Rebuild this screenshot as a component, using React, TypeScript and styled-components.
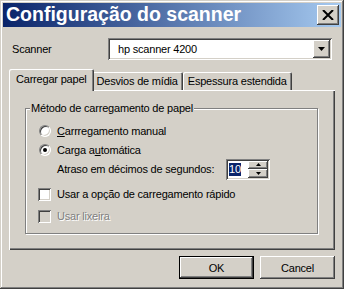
import styled, { createGlobalStyle, css } from "styled-components";

const GlobalStyle = createGlobalStyle`
  html, body {
    margin: 0;
    padding: 0;
    background: #d4d0c8;
  }
  * {
    box-sizing: border-box;
  }
`;

const raised = css`
  box-shadow: inset -1px -1px #404040, inset 1px 1px #ffffff,
    inset -2px -2px #808080, inset 2px 2px #d4d0c8;
`;

const sunken = css`
  box-shadow: inset 1px 1px #808080, inset -1px -1px #ffffff,
    inset 2px 2px #404040, inset -2px -2px #d4d0c8;
`;

function App() {
  return (
    <>
      <GlobalStyle />
      <Window>
        <TitleBar>
          <Title>Configuração do scanner</Title>
          <CloseButton>
            <svg width="12" height="10" viewBox="0 0 12 10">
              <path d="M1 0 L11 10 M11 0 L1 10" stroke="#000" strokeWidth="2" />
            </svg>
          </CloseButton>
        </TitleBar>

        <Body>
          <ScannerRow>
            <ScannerLabel>Scanner</ScannerLabel>
            <Combo>
              <ComboText>hp scanner 4200</ComboText>
              <DropButton>
                <svg width="7" height="4" viewBox="0 0 7 4">
                  <path d="M0 0 H7 L3.5 4 Z" fill="#000" />
                </svg>
              </DropButton>
            </Combo>
          </ScannerRow>

          <TabStrip>
            <Tab $active>Carregar papel</Tab>
            <Tab>Desvios de mídia</Tab>
            <Tab>Espessura estendida</Tab>
          </TabStrip>

          <TabPanel>
            <GroupBox>
              <Legend>Método de carregamento de papel</Legend>

              <OptionRow $h={20}>
                <Indicator>
                  <Radio />
                </Indicator>
                <OptionText>
                  <u>C</u>arrregamento manual
                </OptionText>
              </OptionRow>

              <OptionRow $h={18}>
                <Indicator>
                  <Radio $checked />
                </Indicator>
                <OptionText>
                  Carga a<u>u</u>tomática
                </OptionText>
              </OptionRow>

              <DelayRow>
                <DelayText>Atraso em décimos de segundos:</DelayText>
                <Spinner>
                  <SpinValue>
                    <Selected>10</Selected>
                  </SpinValue>
                  <SpinButtons>
                    <SpinButton>
                      <svg width="5" height="3" viewBox="0 0 5 3">
                        <path d="M2.5 0 L5 3 H0 Z" fill="#000" />
                      </svg>
                    </SpinButton>
                    <SpinButton>
                      <svg width="5" height="3" viewBox="0 0 5 3">
                        <path d="M0 0 H5 L2.5 3 Z" fill="#000" />
                      </svg>
                    </SpinButton>
                  </SpinButtons>
                </Spinner>
              </DelayRow>

              <OptionRow $h={22} $mt={4}>
                <Indicator>
                  <Checkbox />
                </Indicator>
                <OptionText>Usar a opção de carregamento rápido</OptionText>
              </OptionRow>

              <OptionRow $h={22}>
                <Indicator>
                  <Checkbox $disabled />
                </Indicator>
                <OptionText $disabled>Usar lixeira</OptionText>
              </OptionRow>
            </GroupBox>
          </TabPanel>

          <ButtonRow>
            <PushButton $default>OK</PushButton>
            <PushButton>Cancel</PushButton>
          </ButtonRow>
        </Body>
      </Window>
    </>
  );
}

const Window = styled.div`
  width: 344px;
  height: 289px;
  padding: 3px;
  display: flex;
  flex-direction: column;
  background: #d4d0c8;
  box-shadow: inset -1px -1px #404040, inset 1px 1px #d4d0c8,
    inset -2px -2px #808080, inset 2px 2px #ffffff;
  font-family: "Liberation Sans", Arial, sans-serif;
  font-size: 11px;
  letter-spacing: -0.2px;
  color: #000;
`;

const TitleBar = styled.div`
  height: 24px;
  display: flex;
  align-items: center;
  justify-content: space-between;
  padding: 0 2px 0 3px;
  background: linear-gradient(90deg, #0a246a 0%, #a6caf0 100%);
`;

const Title = styled.div`
  color: #ffffff;
  font-weight: bold;
  font-size: 19.5px;
  letter-spacing: 0;
  line-height: 1;
  white-space: nowrap;
`;

const CloseButton = styled.div`
  width: 22px;
  height: 20px;
  display: flex;
  align-items: center;
  justify-content: center;
  background: #d4d0c8;
  ${raised}
`;

const Body = styled.div`
  display: flex;
  flex-direction: column;
  padding: 0 6px;
`;

const ScannerRow = styled.div`
  display: flex;
  align-items: center;
  height: 22px;
  margin-top: 11px;
`;

const ScannerLabel = styled.div`
  width: 99px;
  padding-left: 3px;
`;

const Combo = styled.div`
  width: 224px;
  height: 22px;
  display: flex;
  align-items: center;
  justify-content: space-between;
  padding: 2px;
  background: #ffffff;
  ${sunken}
`;

const ComboText = styled.div`
  padding-left: 8px;
`;

const DropButton = styled.div`
  width: 17px;
  height: 18px;
  display: flex;
  align-items: center;
  justify-content: center;
  background: #d4d0c8;
  ${raised}
`;

const TabStrip = styled.div`
  display: flex;
  align-items: flex-end;
  height: 21px;
  margin-top: 9px;
  padding-left: 2px;
`;

const Tab = styled.div<{ $active?: boolean }>`
  position: relative;
  height: 18px;
  padding: 2px 5px 0;
  line-height: 14px;
  white-space: nowrap;
  background: #d4d0c8;
  border-radius: 2px 2px 0 0;
  box-shadow: inset 1px 1px #ffffff, inset -1px 0 #404040, inset -2px 0 #808080;

  ${({ $active }) =>
    $active &&
    css`
      z-index: 1;
      height: 22px;
      margin: 0 -2px -1px;
      padding: 3px 7px 0;
    `}
`;

const TabPanel = styled.div`
  height: 160px;
  padding: 18px 17px 0 16px;
  box-shadow: inset 1px 1px #ffffff, inset -1px -1px #404040,
    inset -2px -2px #808080;
`;

const GroupBox = styled.div`
  position: relative;
  height: 126px;
  padding: 12px 0 0 12px;
  border: 1px solid #808080;
  box-shadow: inset 1px 1px #ffffff, 1px 1px #ffffff;
`;

const Legend = styled.div`
  position: absolute;
  top: -8px;
  left: 4px;
  padding: 0 1px;
  line-height: 14px;
  background: #d4d0c8;
  white-space: nowrap;
`;

const OptionRow = styled.div<{ $h: number; $mt?: number }>`
  display: flex;
  align-items: center;
  height: ${({ $h }) => $h}px;
  margin-top: ${({ $mt }) => $mt ?? 0}px;
`;

const Indicator = styled.div`
  width: 13px;
  display: flex;
  justify-content: center;
  margin-right: 6px;
`;

const Radio = styled.div<{ $checked?: boolean }>`
  position: relative;
  width: 12px;
  height: 12px;
  border-radius: 50%;
  background: #ffffff;
  border: 1px solid;
  border-color: #808080 #ffffff #ffffff #808080;
  box-shadow: inset 1px 1px #404040, inset -1px -1px #d4d0c8;

  ${({ $checked }) =>
    $checked &&
    css`
      &::after {
        content: "";
        position: absolute;
        left: 3px;
        top: 3px;
        width: 4px;
        height: 4px;
        border-radius: 50%;
        background: #000;
      }
    `}
`;

const Checkbox = styled.div<{ $disabled?: boolean }>`
  width: 13px;
  height: 13px;
  background: ${({ $disabled }) => ($disabled ? "#d4d0c8" : "#ffffff")};
  ${sunken}
`;

const OptionText = styled.div<{ $disabled?: boolean }>`
  white-space: nowrap;
  ${({ $disabled }) =>
    $disabled &&
    css`
      color: #808080;
      text-shadow: 1px 1px #ffffff;
    `}
`;

const DelayRow = styled.div`
  display: flex;
  align-items: center;
  height: 20px;
  padding-left: 19px;
`;

const DelayText = styled.div`
  width: 169px;
  white-space: nowrap;
`;

const Spinner = styled.div`
  width: 44px;
  height: 21px;
  padding: 2px;
  display: flex;
  background: #ffffff;
  ${sunken}
`;

const SpinValue = styled.div`
  flex: 1;
  display: flex;
  align-items: center;
  padding-left: 1px;
`;

const Selected = styled.span`
  background: #0a246a;
  color: #ffffff;
  line-height: 13px;
`;

const SpinButtons = styled.div`
  width: 20px;
  display: flex;
  flex-direction: column;
`;

const SpinButton = styled.div`
  flex: 1;
  display: flex;
  align-items: center;
  justify-content: center;
  background: #d4d0c8;
  ${raised}
`;

const ButtonRow = styled.div`
  display: flex;
  justify-content: flex-end;
  gap: 6px;
  margin-top: 6px;
`;

const PushButton = styled.div<{ $default?: boolean }>`
  width: 75px;
  height: 23px;
  display: flex;
  align-items: center;
  justify-content: center;
  background: #d4d0c8;
  ${raised}

  ${({ $default }) =>
    $default &&
    css`
      box-shadow: inset 0 0 0 1px #000, inset -2px -2px #404040,
        inset 2px 2px #ffffff, inset -3px -3px #808080,
        inset 3px 3px #d4d0c8;
    `}
`;

export default App;
